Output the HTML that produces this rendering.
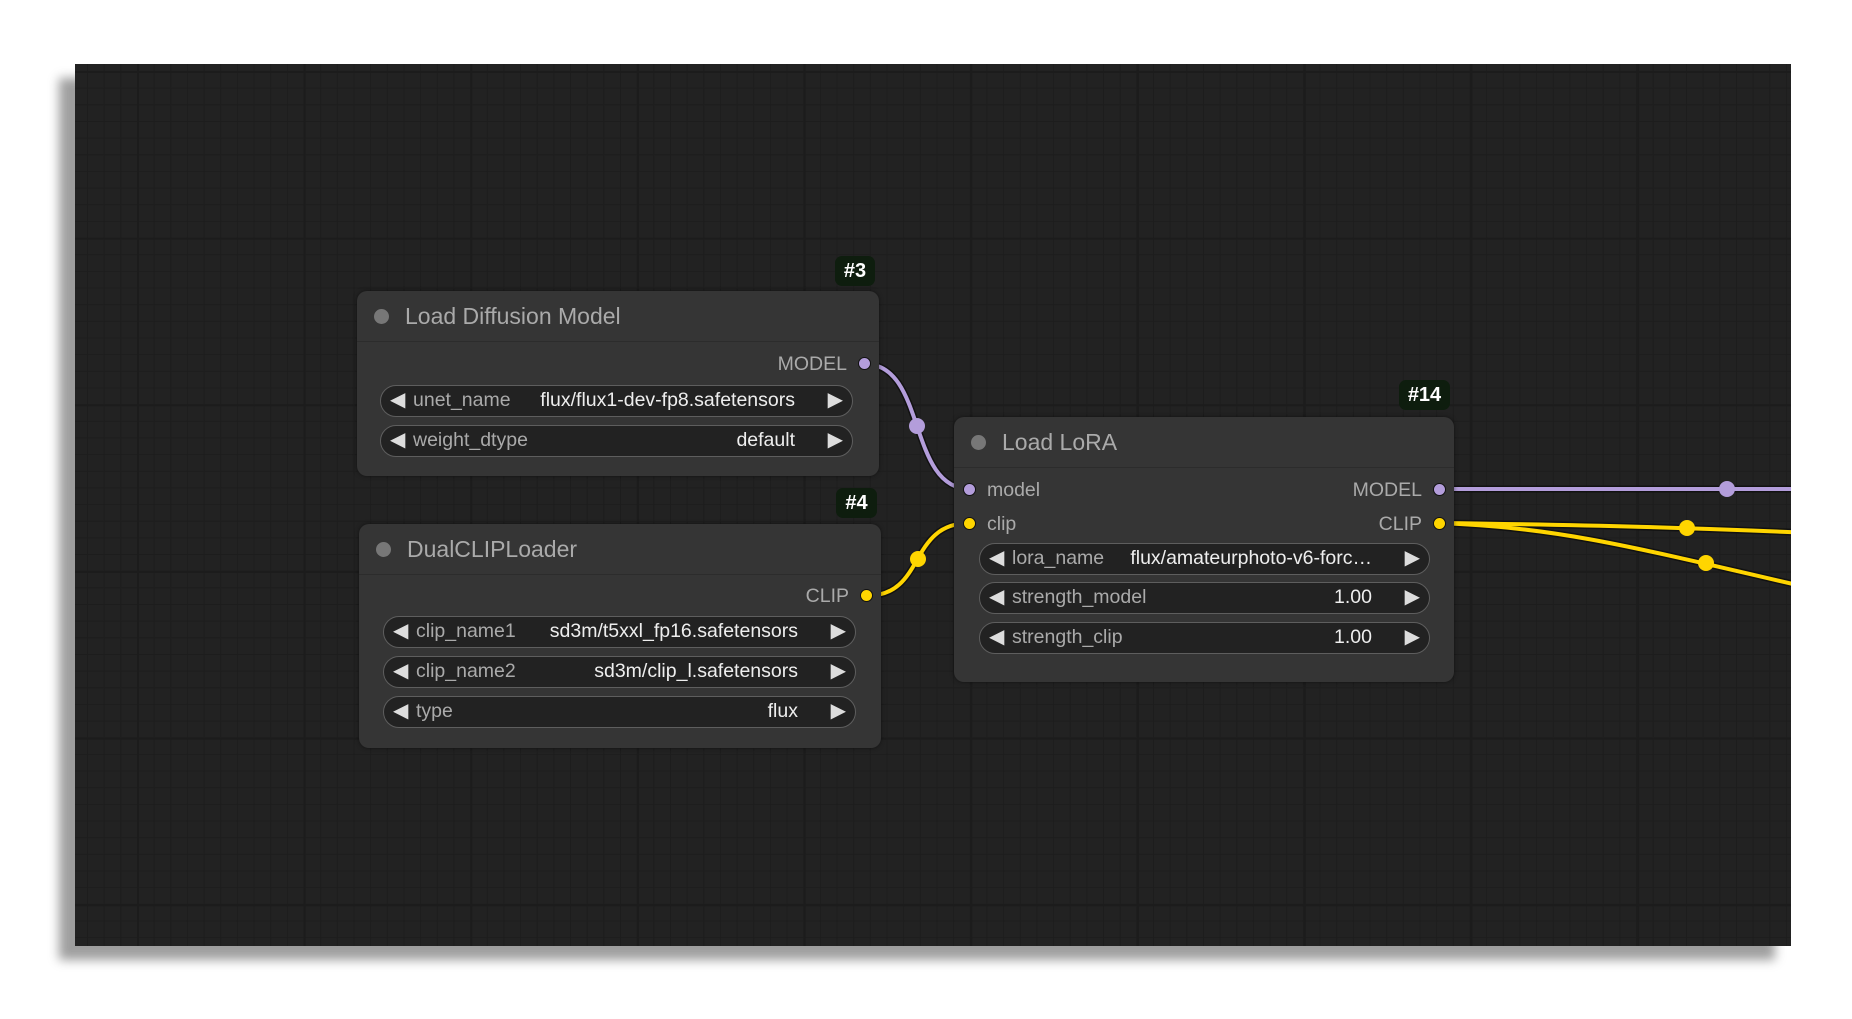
<!DOCTYPE html>
<html><head><meta charset="utf-8"><style>
*{margin:0;padding:0;box-sizing:border-box}
body{width:1852px;height:1019px;background:#fff;position:relative;overflow:hidden;font-family:"Liberation Sans",Arial,sans-serif}
#canvas{position:absolute;left:75px;top:64px;width:1725px;height:887px;background-color:#222;
background-image:linear-gradient(#1c1c1c 2px,transparent 2px),linear-gradient(90deg,#1c1c1c 2px,transparent 2px),linear-gradient(#1d1d1d 1px,transparent 1px),linear-gradient(90deg,#1d1d1d 1px,transparent 1px);
background-size:166.7px 166.7px,166.7px 166.7px,16.67px 16.67px,16.67px 16.67px;background-position:62px 7px,62px 7px,12px 7px,12px 7px;
box-shadow:-16px 14px 10px rgba(0,0,0,.38);overflow:hidden}
.node{position:absolute;background:#353535;border-radius:10px;box-shadow:0 0 4px rgba(0,0,0,.5)}
.title{height:51px;border-bottom:1px solid #2c2c2c;position:relative;color:#aaa;font-size:23px;line-height:51px}
.title .d{position:absolute;left:17px;top:18px;width:15px;height:15px;border-radius:50%;background:#777}
.title span{position:absolute;left:48px}
.badge{position:absolute;background:#0e1d0e;color:#fff;font-weight:bold;font-size:20px;border-radius:7px;text-align:center;line-height:30px;height:30px}
.w{position:absolute;height:32px;border:1.5px solid #5e5e5e;border-radius:16px;background:#222;font-size:19.5px;line-height:29px;color:#aaa}
.w .l{position:absolute;left:9px;color:#ddd;font-size:20px}
.w .r{position:absolute;right:9px;color:#ddd;font-size:20px}
.w .n{position:absolute;left:32px}
.w .v{position:absolute;right:57px;color:#eee}
.lab{position:absolute;font-size:19.5px;color:#aaa;line-height:20px}
.dot{position:absolute;width:13px;height:13px;border-radius:50%;border:1.5px solid #111}
.p{background:#b39ddb}.y{background:#ffd500}
svg{position:absolute;left:0;top:0}
</style></head><body>
<div id="canvas" style="width:1716px;height:882px"></div>
<svg width="1852" height="1019" viewBox="0 0 1852 1019">
<defs><clipPath id="c"><rect x="75" y="64" width="1716" height="882"/></clipPath></defs>
<g clip-path="url(#c)" fill="none" stroke-linecap="round">
<g stroke="#111" stroke-width="7">
<path d="M865 364 C927 364 907 489 970 489"/>
<path d="M866 596 C927 596 907 523 970 523"/>
<path d="M1439 489 L1810 489"/>
<path d="M1439 523 C1597 525 1697 528 1810 533"/>
<path d="M1439 523 C1557 528 1617 543 1810 588"/>
</g>
<g stroke="#b39ddb" stroke-width="4">
<path d="M865 364 C927 364 907 489 970 489"/>
<path d="M1439 489 L1810 489"/>
</g>
<g stroke="#ffd500" stroke-width="4">
<path d="M866 596 C927 596 907 523 970 523"/>
<path d="M1439 523 C1597 525 1697 528 1810 533"/>
<path d="M1439 523 C1557 528 1617 543 1810 588"/>
</g>
</g>
<circle cx="917" cy="426" r="8" fill="#b39ddb"/>
<circle cx="1727" cy="489" r="8" fill="#b39ddb"/>
<circle cx="918" cy="559" r="8" fill="#ffd500"/>
<circle cx="1687" cy="528" r="8" fill="#ffd500"/>
<circle cx="1706" cy="563" r="8" fill="#ffd500"/>
</svg>

<div class="badge" style="left:835px;top:256px;width:40px">#3</div>
<div class="node" style="left:357px;top:291px;width:522px;height:185px">
<div class="title"><div class="d"></div><span>Load Diffusion Model</span></div>
<div class="lab" style="right:32px;top:63px">MODEL</div>
<div class="dot p" style="right:8px;top:66px"></div>
<div class="w" style="left:23px;top:94px;width:473px"><span class="l">◀</span><span class="n">unet_name</span><span class="v">flux/flux1-dev-fp8.safetensors</span><span class="r">▶</span></div>
<div class="w" style="left:23px;top:134px;width:473px"><span class="l">◀</span><span class="n">weight_dtype</span><span class="v">default</span><span class="r">▶</span></div>
</div>

<div class="badge" style="left:836px;top:488px;width:41px">#4</div>
<div class="node" style="left:359px;top:524px;width:522px;height:224px">
<div class="title"><div class="d"></div><span>DualCLIPLoader</span></div>
<div class="lab" style="right:32px;top:62px">CLIP</div>
<div class="dot y" style="right:8px;top:65px"></div>
<div class="w" style="left:24px;top:92px;width:473px"><span class="l">◀</span><span class="n">clip_name1</span><span class="v">sd3m/t5xxl_fp16.safetensors</span><span class="r">▶</span></div>
<div class="w" style="left:24px;top:132px;width:473px"><span class="l">◀</span><span class="n">clip_name2</span><span class="v">sd3m/clip_l.safetensors</span><span class="r">▶</span></div>
<div class="w" style="left:24px;top:172px;width:473px"><span class="l">◀</span><span class="n">type</span><span class="v">flux</span><span class="r">▶</span></div>
</div>

<div class="badge" style="left:1399px;top:380px;width:51px">#14</div>
<div class="node" style="left:954px;top:417px;width:500px;height:265px">
<div class="title"><div class="d"></div><span>Load LoRA</span></div>
<div class="dot p" style="left:9px;top:66px"></div>
<div class="lab" style="left:33px;top:63px">model</div>
<div class="lab" style="right:32px;top:63px">MODEL</div>
<div class="dot p" style="right:8px;top:66px"></div>
<div class="dot y" style="left:9px;top:100px"></div>
<div class="lab" style="left:33px;top:97px">clip</div>
<div class="lab" style="right:32px;top:97px">CLIP</div>
<div class="dot y" style="right:8px;top:100px"></div>
<div class="w" style="left:25px;top:126px;width:451px"><span class="l">◀</span><span class="n">lora_name</span><span class="v">flux/amateurphoto-v6-forc…</span><span class="r">▶</span></div>
<div class="w" style="left:25px;top:165px;width:451px"><span class="l">◀</span><span class="n">strength_model</span><span class="v">1.00</span><span class="r">▶</span></div>
<div class="w" style="left:25px;top:205px;width:451px"><span class="l">◀</span><span class="n">strength_clip</span><span class="v">1.00</span><span class="r">▶</span></div>
</div>
</body></html>
